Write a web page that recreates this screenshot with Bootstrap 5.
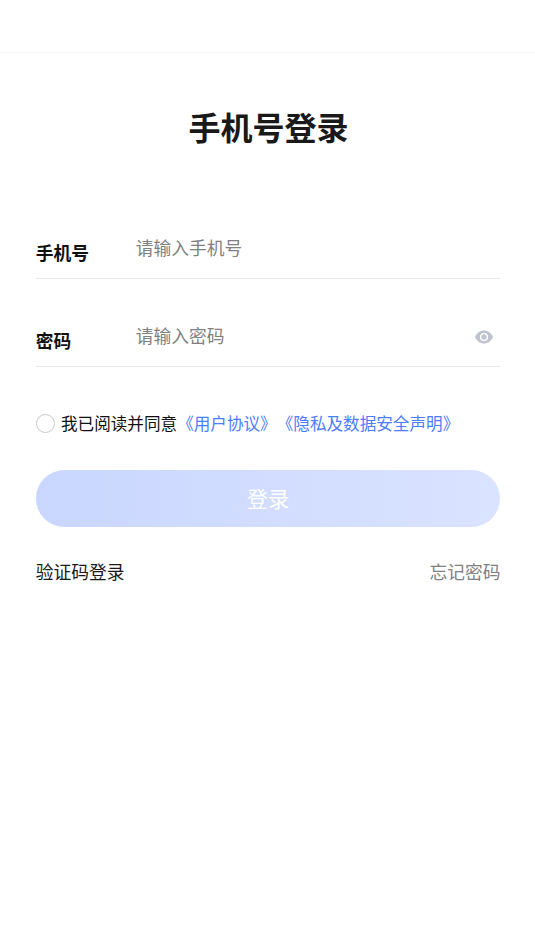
<!DOCTYPE html>
<html lang="zh-CN">
<head>
<meta charset="utf-8">
<meta name="viewport" content="width=device-width, initial-scale=1">
<title>手机号登录</title>
<link href="https://cdn.jsdelivr.net/npm/bootstrap@5.3.0/dist/css/bootstrap.min.css" rel="stylesheet">
<style>
body{font-family:"Noto Sans CJK SC",sans-serif;color:#111;background:#fff;font-size:17.75px;line-height:26px}
.topbar{height:53px;border-bottom:1px solid #f5f5f5}
.login-main{padding:0 34.6px 0 35.8px}
.login-title{font-size:32px;line-height:48px;font-weight:700;margin:49px 0 84px;padding-left:1px;color:#191919}
.field{height:45px;border-bottom:1px solid #e8e8e8;margin-bottom:43px}
.field-label{width:100px;font-weight:700;padding-top:5px}
.field .form-control{font-size:17.75px;line-height:26px;height:26px;color:#111;border-radius:0;box-shadow:none;background:transparent}
.field .form-control::placeholder{color:#808080;opacity:1}
.eye{width:18px;height:14px;margin:7.5px 7.400px 0 0}
.agree{height:24px;font-size:16.6px;line-height:24px;margin-top:44px}
.agree label,.agree a{margin-top:-1px}
.agree .form-check-input{width:19px;height:19px;border:1px solid #c8c8c8;margin:0 6.2px 0 0}
.agree a{color:#4d7cfe}
.login-btn{height:57px;margin-top:35px;font-size:21.3px;line-height:54px;padding:0 0 2px;color:#fff;border:0;background:linear-gradient(90deg,#c9d6ff,#dae3ff)}
.login-links{margin-top:31px}
.login-links a{color:#191919}
.login-links .forgot{color:#808080}
</style>
</head>
<body>
<header class="topbar"></header>
<main class="login-main">
<h1 class="login-title text-center">手机号登录</h1>
<form>
<div class="field d-flex align-items-start">
<label class="field-label flex-shrink-0" for="phone">手机号</label>
<input class="form-control border-0 p-0" id="phone" type="tel" placeholder="请输入手机号">
</div>
<div class="field d-flex align-items-start">
<label class="field-label flex-shrink-0" for="pwd">密码</label>
<input class="form-control border-0 p-0" id="pwd" type="password" placeholder="请输入密码">
<svg class="eye flex-shrink-0" viewBox="0 0 18 14"><path fill="#c0c4cc" d="M9 .5C5 .5 1.800 3 0 7c1.800 4 5 6.500 9 6.500s7.200-2.500 9-6.500C16.200 3 13 .5 9 .5z"/><circle cx="9" cy="7" r="3.400" fill="#c0c4cc" stroke="#fff" stroke-width="1.400"/></svg>
</div>
<div class="agree d-flex align-items-center text-nowrap">
<input class="form-check-input rounded-circle flex-shrink-0" type="checkbox" id="agree">
<label for="agree">我已阅读并同意</label><a class="text-decoration-none" href="#">《用户协议》</a><a class="text-decoration-none" href="#">《隐私及数据安全声明》</a>
</div>
<button class="login-btn btn w-100 rounded-pill" type="button">登录</button>
<div class="login-links d-flex justify-content-between">
<a class="text-decoration-none" href="#">验证码登录</a>
<a class="forgot text-decoration-none" href="#">忘记密码</a>
</div>
</form>
</main>
<script src="https://cdn.jsdelivr.net/npm/bootstrap@5.3.0/dist/js/bootstrap.bundle.min.js"></script>
</body>
</html>
